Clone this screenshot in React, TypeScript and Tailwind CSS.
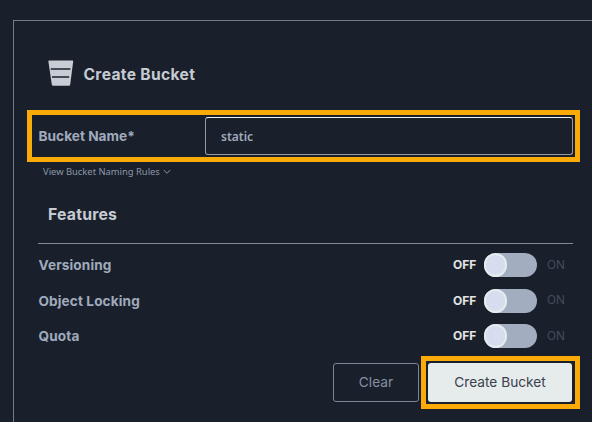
type ToggleRowProps = { label: string };

function ToggleRow({ label }: ToggleRowProps) {
  return (
    <div className="flex h-[35.5px] items-center">
      <span className="flex-1 pt-px pl-[0.5px] text-[13.6px] font-bold tracking-[0.12px] text-[#a0aabd]">{label}</span>
      <span className="w-[31px] text-[12px] font-bold text-[#e4e4e4]">OFF</span>
      <span className="flex h-6 w-[53px] items-center rounded-full bg-[#a3adc0]">
        <span className="h-6 w-[23px] rounded-full border-2 border-[#e6ecec] bg-[#d5ddee]" />
      </span>
      <span className="w-[35px] pt-px pl-[10px] text-[11.8px] text-[#414c5c]">ON</span>
    </div>
  );
}

function BucketIcon() {
  return (
    <svg width="26" height="26" viewBox="0 0 26 26" className="shrink-0">
      <path d="M1.2 0.4h23.2q1 0 .8 1.2l-3 22.8q-.2 1.3-1.4 1.3H5.2q-1.2 0-1.4-1.3L.4 1.6Q.2.4 1.2.4Z" fill="#c8ccd4" />
      <path d="M2.8 9h19.6M4 17h17.2" stroke="#19202b" strokeWidth="1.4" />
    </svg>
  );
}

export default function App() {
  return (
    <div className="h-[422px] w-[592px] overflow-hidden bg-[#19202b] pt-[20px] pl-[13px] font-['Inter','Liberation_Sans',sans-serif]">
      <div className="relative h-[420px] w-[600px] border border-[#757b89] pl-[24px]">
        <div className="w-[534.5px]">
          <div className="flex h-[96px] items-center gap-[10px] pt-[8px] pl-[9.5px]">
            <BucketIcon />
            <h1 className="pt-[3px] text-[15.6px] font-bold tracking-[0.33px] text-[#c6cad2]">Create Bucket</h1>
          </div>
          <div className="flex h-[38px] items-center">
            <label htmlFor="bucket" className="w-[167px] pt-px pl-[0.5px] text-[13.7px] font-bold text-[#a0aabd]">Bucket Name*</label>
            <input
              id="bucket"
              defaultValue="static"
              className="h-[38px] w-[367.5px] rounded-[3px] border border-[#9599a0] border-t-[#f0f4f2] px-[15px] font-['Noto_Sans',sans-serif] text-[12px] font-semibold text-[#a0aabd] outline-none"
            />
          </div>
          <div className="flex h-[34px] items-center gap-[3px] pl-[5px] font-['Noto_Sans',sans-serif] text-[9.4px] text-[#8c96a8]">
            View Bucket Naming Rules
            <svg width="8" height="6" viewBox="0 0 8 6" fill="none" stroke="#8c96a8">
              <path d="M.8 1 4 4.3 7.2 1" />
            </svg>
          </div>
          <div className="flex h-[55px] items-center border-b border-[#838b9a] pb-[2px] pl-[10px]">
            <h2 className="text-[15.8px] font-bold tracking-[0.2px] text-[#c6cad2]">Features</h2>
          </div>
          <div className="-mr-[0.5px] pt-[3.4px] pr-[1px]">
            <ToggleRow label="Versioning" />
            <ToggleRow label="Object Locking" />
            <ToggleRow label="Quota" />
          </div>
          <div className="flex justify-end gap-[9px] pt-[9.1px] pr-[0.5px]">
            <button className="h-[39px] w-[86px] rounded-[3px] border border-[#7c8596] text-[13.7px] text-[#858fa1]">Clear</button>
            <button className="h-[39px] w-[144px] rounded-[3px] bg-[#e6ebeb] text-[13.7px] text-[#3a414d]">Create Bucket</button>
          </div>
        </div>
        <div className="pointer-events-none absolute top-[89px] left-[13px] h-[52px] w-[553px] border-5 border-[#fbab08]" />
        <div className="pointer-events-none absolute top-[335px] left-[407px] h-[53px] w-[159px] border-5 border-[#fbab08]" />
      </div>
    </div>
  );
}
